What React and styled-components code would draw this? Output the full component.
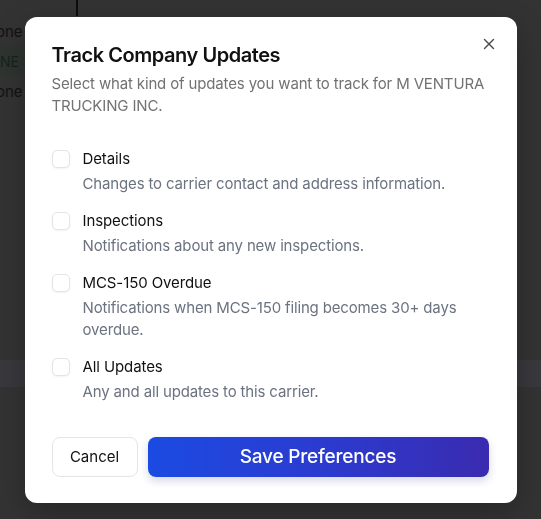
import styled, { createGlobalStyle } from 'styled-components';

const GlobalStyle = createGlobalStyle`
	html, body {
		margin: 0;
		padding: 0;
		background: #333333;
		font-family: Inter, "Noto Sans", "Liberation Sans", sans-serif;
		-webkit-font-smoothing: antialiased;
	}
	* {
		box-sizing: border-box;
	}
`;

const options = [
	{ id: 'details', label: 'Details', text: 'Changes to carrier contact and address information.' },
	{ id: 'inspections', label: 'Inspections', text: 'Notifications about any new inspections.' },
	{
		id: 'mcs150',
		label: 'MCS-150 Overdue',
		text: 'Notifications when MCS-150 filing becomes 30+ days overdue.',
	},
	{ id: 'all', label: 'All Updates', text: 'Any and all updates to this carrier.' },
];

function CloseIcon() {
	return (
		<svg width="12" height="12" viewBox="0 0 12 12" fill="none">
			<path d="M1.5 1.5L10.5 10.5M10.5 1.5L1.5 10.5" stroke="#4b4b4b" strokeWidth="1.4" strokeLinecap="round" />
		</svg>
	);
}

function App() {
	return (
		<>
			<GlobalStyle />
			<Page>
				<TopRule />
				<BgRow>one</BgRow>
				<BgPill>NE</BgPill>
				<BgRow>one</BgRow>
				<BgBand />
			</Page>
			<Overlay>
				<Modal>
					<Header>
						<Title>Track Company Updates</Title>
						<CloseButton aria-label="Close">
							<CloseIcon />
						</CloseButton>
					</Header>
					<Subtitle>Select what kind of updates you want to track for M VENTURA TRUCKING INC.</Subtitle>

					<OptionList>
						{options.map((option) => (
							<Option key={option.id}>
								<Checkbox type="checkbox" id={option.id} />
								<OptionText>
									<Label htmlFor={option.id}>{option.label}</Label>
									<Description>{option.text}</Description>
								</OptionText>
							</Option>
						))}
					</OptionList>

					<Footer>
						<CancelButton>Cancel</CancelButton>
						<SaveButton>Save Preferences</SaveButton>
					</Footer>
				</Modal>
			</Overlay>
		</>
	);
}

export default App;

const Page = styled.div`
	min-height: 100vh;
	background: #333333;
	display: flex;
	flex-direction: column;
	overflow: hidden;
`;

const TopRule = styled.div`
	width: 2px;
	height: 16px;
	margin-left: 76px;
	background: #0d0d0d;
`;

const BgRow = styled.div`
	margin-left: -4px;
	height: 30px;
	display: flex;
	align-items: center;
	font-size: 15px;
	color: #121212;
`;

const BgPill = styled.div`
	margin-left: -10px;
	width: 70px;
	height: 30px;
	border-radius: 14px;
	display: flex;
	align-items: center;
	padding-left: 10px;
	font-size: 14px;
	color: #14241a;
	background: #2f3431;
`;

const BgBand = styled.div`
	margin-top: 254px;
	height: 27px;
	background: #38383d;
`;

const Overlay = styled.div`
	position: fixed;
	inset: 0;
	display: grid;
	place-items: center;
`;

const Modal = styled.div`
	width: 492px;
	background: #ffffff;
	border-radius: 12px;
	padding: 24px 28px 26px 27px;
	box-shadow: 0 10px 30px rgba(0, 0, 0, 0.25);
`;

const Header = styled.div`
	display: flex;
	justify-content: space-between;
	align-items: flex-start;
`;

const Title = styled.h2`
	margin: 0;
	font-size: 20px;
	line-height: 28px;
	font-weight: 600;
	color: #111111;
	letter-spacing: -0.45px;
`;

const CloseButton = styled.button`
	background: none;
	border: none;
	padding: 0;
	margin: -5px -8px 0 0;
	width: 16px;
	height: 16px;
	display: grid;
	place-items: center;
	cursor: pointer;
`;

const Subtitle = styled.p`
	margin: 4px 0 0;
	font-size: 15px;
	line-height: 22px;
	color: #727272;
	letter-spacing: -0.15px;
`;

const OptionList = styled.div`
	margin-top: 30px;
	display: flex;
	flex-direction: column;
	gap: 14px;
`;

const Option = styled.div`
	display: flex;
	gap: 13px;
	align-items: flex-start;
`;

const Checkbox = styled.input`
	appearance: none;
	flex: none;
	margin: 3px 0 0;
	width: 18px;
	height: 18px;
	border: 1px solid #e4e4e7;
	border-radius: 5px;
	background: #ffffff;
	box-shadow: 0 1px 2px rgba(0, 0, 0, 0.05);
	cursor: pointer;
`;

const OptionText = styled.div`
	display: flex;
	flex-direction: column;
	gap: 2px;
`;

const Label = styled.label`
	font-size: 15px;
	line-height: 24px;
	color: #111111;
	cursor: pointer;
	letter-spacing: -0.1px;
`;

const Description = styled.div`
	font-size: 15px;
	line-height: 22px;
	color: #6b7280;
	letter-spacing: -0.15px;
	max-width: 380px;
`;

const Footer = styled.div`
	margin-top: 34px;
	display: flex;
	gap: 10px;
`;

const CancelButton = styled.button`
	flex: none;
	width: 86px;
	height: 40px;
	border: 1px solid #e5e5e5;
	border-radius: 8px;
	background: #ffffff;
	font-family: inherit;
	font-size: 15px;
	color: #111111;
	cursor: pointer;
`;

const SaveButton = styled.button`
	flex: 1;
	height: 40px;
	border: none;
	border-radius: 8px;
	background: linear-gradient(90deg, #1b4be2 0%, #2b3bd0 50%, #3a2bb0 100%);
	box-shadow: 0 4px 8px rgba(30, 40, 120, 0.18);
	font-family: inherit;
	font-size: 19px;
	font-weight: 500;
	color: #ffffff;
	letter-spacing: -0.2px;
	cursor: pointer;
`;
